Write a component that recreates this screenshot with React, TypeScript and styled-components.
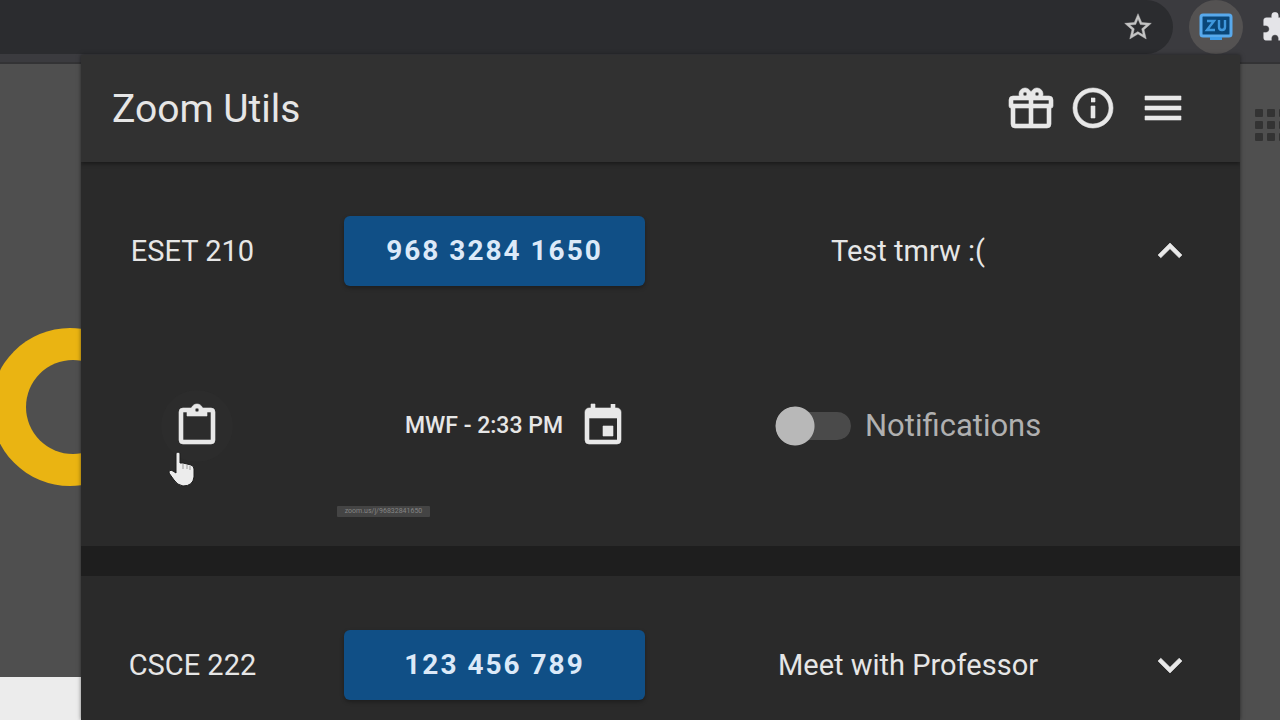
import React, { useState } from "react";
import styled, { createGlobalStyle } from "styled-components";

const GlobalStyle = createGlobalStyle`
  * { box-sizing: border-box; }
  html, body, #root { height: 100%; }
  body { margin: 0; background: #4f4f4f; color: #e6e6e6; font-family: Roboto, sans-serif; overflow: hidden; }
  button, input { font: inherit; }
`;

const Browser = styled.div`
  height: 100vh;
  display: flex;
  flex-direction: column;
`;

const Toolbar = styled.header`
  height: 64px;
  flex: none;
  display: flex;
  align-items: flex-start;
  background: #3b3b3f;
  border-bottom: 2px solid #333335;
`;

const AddressBar = styled.div`
  flex: 1;
  height: 54px;
  display: flex;
  align-items: center;
  justify-content: flex-end;
  padding-right: 19px;
  border-radius: 0 27px 27px 0;
  background: #2b2c2f;
`;

const PlainButton = styled.button`
  display: flex;
  align-items: center;
  justify-content: center;
  padding: 0;
  border: 0;
  background: none;
  color: inherit;
  cursor: pointer;
`;

const Extensions = styled.div`
  width: 107px;
  height: 54px;
  display: flex;
  align-items: center;
  gap: 18px;
  padding-left: 16px;
  overflow: hidden;
`;

const ExtensionButton = styled(PlainButton)`
  flex: none;
  width: 54px;
  height: 54px;
  border-radius: 50%;
  background: #545252;
`;

const PuzzleButton = styled(PlainButton)`
  flex: none;
`;

const Page = styled.main`
  flex: 1;
  min-height: 0;
  display: grid;
  grid-template-columns: 81px 1fr 40px;
  grid-template-rows: minmax(0, 1fr);
`;

const Backdrop = styled.div`
  display: flex;
  flex-direction: column;
  justify-content: space-between;
  overflow: hidden;
`;

const Logo = styled.svg`
  display: block;
  flex: none;
  margin-top: 263px;
`;

const Footer = styled.div`
  height: 43px;
  background: #ececec;
`;

const AppsButton = styled(PlainButton)`
  width: 40px;
  margin-top: 44px;
  justify-content: flex-start;
  padding-left: 15px;

  svg { flex: none; }
`;

const Popup = styled.section`
  position: relative;
  display: flex;
  flex-direction: column;
  margin-top: -9px;
  overflow-y: auto;
  scrollbar-width: none;
  background: #1e1e1e;
  box-shadow: 0 0 4px rgba(0, 0, 0, 0.5);
`;

const AppBar = styled.div`
  height: 107px;
  flex: none;
  display: flex;
  align-items: center;
  padding: 0 53px 0 31px;
  background: #313131;
  box-shadow: 0 2px 4px rgba(0, 0, 0, 0.4);
  z-index: 1;
`;

const Title = styled.h1`
  flex: 1;
  margin: 0;
  font-size: 39px;
  line-height: 48px;
  font-weight: 400;
`;

const BarActions = styled.nav`
  display: flex;
  gap: 14px;
  padding-bottom: 2px;

  button:last-child { margin-left: 8px; }
`;

const Meetings = styled.div`
  display: flex;
  flex-direction: column;
  gap: 30px;
`;

const Meeting = styled.article`
  background: #2a2a2a;
`;

const Row = styled.div<{ $detail?: boolean }>`
  height: ${(p) => (p.$detail ? "208px" : "176px")};
  display: grid;
  grid-template-columns: 223px 381px 1fr 94px;
  align-items: center;
  padding: ${(p) => (p.$detail ? "0 0 32px" : "2px 0 0")};
`;

const Name = styled.h2`
  margin: 0;
  text-align: center;
  font-size: 29px;
  line-height: 36px;
  font-weight: 400;
`;

const Note = styled.p`
  margin: 0;
  padding-right: 15px;
  text-align: center;
  font-size: 29px;
  line-height: 36px;
`;

const JoinButton = styled.button`
  justify-self: center;
  width: 301px;
  height: 70px;
  border: 0;
  border-radius: 6px;
  background: #104f86;
  color: #dce9f8;
  font-size: 28px;
  line-height: 36px;
  font-weight: 700;
  letter-spacing: 2px;
  box-shadow: 0 2px 4px rgba(0, 0, 0, 0.3);
  cursor: pointer;
`;

const Toggle = styled(PlainButton)`
  width: 48px;
  height: 48px;
`;

const CopyButton = styled(PlainButton)`
  justify-self: center;
  width: 72px;
  height: 72px;
  margin-left: 8px;
  border-radius: 50%;
  background: #2c2c2c;
`;

const Schedule = styled.div`
  display: flex;
  align-items: center;
  justify-content: flex-end;
  gap: 16px;
  padding-right: 58px;
  font-size: 23px;
  font-weight: 500;
  line-height: 32px;
`;

const SwitchLabel = styled.label`
  display: flex;
  align-items: center;
  gap: 14px;
  padding-left: 90px;
  color: #b0b0b0;
  font-size: 31px;
  line-height: 36px;
`;

const Switch = styled.input`
  appearance: none;
  flex: none;
  width: 76px;
  height: 40px;
  margin: 0;
  border-radius: 20px;
  background:
    radial-gradient(circle at ${(p) => (p.checked ? "56px" : "20px")} 20px, #b8b8b8 19px, transparent 20px),
    linear-gradient(#4a4a4a, #4a4a4a) right center / 62px 28px no-repeat;
  clip-path: path("M20 0 A20 20 0 0 0 20 40 Q32 40 37 34 H62 A14 14 0 0 0 62 6 H37 Q32 0 20 0 Z");
`;

const Tooltip = styled.span`
  position: absolute;
  left: 256px;
  top: 451px;
  width: 93px;
  height: 11px;
  border-radius: 1px;
  background: #444;
  color: #858585;
  font-size: 7px;
  line-height: 11px;
  text-align: center;
  white-space: nowrap;
`;

const Pointer = styled.svg`
  position: absolute;
  left: 87px;
  top: 395px;
  pointer-events: none;
`;

const paths = {
  gift: "M22,12V20A2,2 0 0,1 20,22H4A2,2 0 0,1 2,20V12A1,1 0 0,1 1,11V8A2,2 0 0,1 3,6H6.17C6.06,5.69 6,5.35 6,5A3,3 0 0,1 9,2C10,2 10.88,2.5 11.43,3.24V3.23L12,4L12.57,3.23V3.24C13.12,2.5 14,2 15,2A3,3 0 0,1 18,5C18,5.35 17.94,5.69 17.83,6H21A2,2 0 0,1 23,8V11A1,1 0 0,1 22,12M4,20H11V12H4V20M20,20V12H13V20H20M9,4A1,1 0 0,0 8,5A1,1 0 0,0 9,6A1,1 0 0,0 10,5A1,1 0 0,0 9,4M15,4A1,1 0 0,0 14,5A1,1 0 0,0 15,6A1,1 0 0,0 16,5A1,1 0 0,0 15,4M3,8V10H11V8H3M13,8V10H21V8H13Z",
  info: "M11,9H13V7H11M12,20C7.59,20 4,16.41 4,12C4,7.59 7.59,4 12,4C16.41,4 20,7.59 20,12C20,16.41 16.41,20 12,20M12,2A10,10 0 0,0 2,12A10,10 0 0,0 12,22A10,10 0 0,0 22,12A10,10 0 0,0 12,2M11,17H13V11H11V17Z",
  menu: "M3,6H21V8H3V6M3,11H21V13H3V11M3,16H21V18H3V16Z",
  clipboard: "M19,3H14.82C14.4,1.84 13.3,1 12,1C10.7,1 9.6,1.84 9.18,3H5A2,2 0 0,0 3,5V19A2,2 0 0,0 5,21H19A2,2 0 0,0 21,19V5A2,2 0 0,0 19,3M12,3A1,1 0 0,1 13,4A1,1 0 0,1 12,5A1,1 0 0,1 11,4A1,1 0 0,1 12,3M7,7H17V5H19V19H5V5H7V7Z",
  calendar: "M19,19H5V8H19M16,1V3H8V1H6V3H5C3.89,3 3,3.89 3,5V19A2,2 0 0,0 5,21H19A2,2 0 0,0 21,19V5C21,3.89 20.1,3 19,3H18V1M17,12H12V17H17V12Z",
  up: "M7.41,15.41L12,10.83L16.59,15.41L18,14L12,8L6,14L7.41,15.41Z",
  down: "M7.41,8.58L12,13.17L16.59,8.58L18,10L12,16L6,10L7.41,8.58Z",
  star: "M12,15.39L8.24,17.66L9.23,13.38L5.91,10.5L10.29,10.13L12,6.09L13.71,10.13L18.09,10.5L14.77,13.38L15.76,17.66M22,9.24L14.81,8.63L12,2L9.19,8.63L2,9.24L7.45,13.97L5.82,21L12,17.27L18.18,21L16.54,13.97L22,9.24Z",
  puzzle: "M20.5,11H19V7C19,5.89 18.1,5 17,5H13V3.5A2.5,2.5 0 0,0 10.5,1A2.5,2.5 0 0,0 8,3.5V5H4A2,2 0 0,0 2,7V10.8H3.5C5,10.8 6.2,12 6.2,13.5C6.2,15 5,16.2 3.5,16.2H2V20A2,2 0 0,0 4,22H7.8V20.5C7.8,19 9,17.8 10.5,17.8C12,17.8 13.2,19 13.2,20.5V22H17A2,2 0 0,0 19,20V16H20.5A2.5,2.5 0 0,0 23,13.5A2.5,2.5 0 0,0 20.5,11Z",
};

interface IconProps {
  name: keyof typeof paths;
  size?: number;
  color?: string;
}

function Icon({ name, size = 48, color = "#e8e8e8" }: IconProps) {
  return (
    <svg width={size} height={size} viewBox="0 0 24 24" fill={color} stroke={color} strokeWidth="0.3" aria-hidden="true">
      <path d={paths[name]} />
    </svg>
  );
}

function MonitorLogo() {
  return (
    <svg width="34" height="30" viewBox="0 0 34 30" aria-hidden="true">
      <rect x="2" y="3" width="30" height="21" rx="2" fill="#0a4678" stroke="#58a9ec" strokeWidth="3" />
      <path d="M11 25h12v3H11z" fill="#3d9be8" />
      <path d="M8 9h7l-7 9h8M20 8v7q0 3 3 3h0q3 0 3-3V8" fill="none" stroke="#3f97dc" strokeWidth="2.4" />
    </svg>
  );
}

export default function App() {
  const [open, setOpen] = useState(true);
  const [notify, setNotify] = useState(false);

  return (
    <>
      <GlobalStyle />
      <Browser>
        <Toolbar>
          <AddressBar>
            <PlainButton aria-label="Bookmark">
              <Icon name="star" size={32} color="#c4c4c4" />
            </PlainButton>
          </AddressBar>
          <Extensions>
            <ExtensionButton aria-label="Zoom Utils extension">
              <MonitorLogo />
            </ExtensionButton>
            <PuzzleButton aria-label="Extensions">
              <Icon name="puzzle" size={32} color="#e4e4e8" />
            </PuzzleButton>
          </Extensions>
        </Toolbar>
        <Page>
          <Backdrop>
            <Logo width="81" height="160" viewBox="0 0 81 160" aria-hidden="true">
              <circle cx="70" cy="80" r="79" fill="#eab412" />
              <circle cx="73" cy="80" r="47" fill="#4f4f4f" />
            </Logo>
            <Footer />
          </Backdrop>
          <Popup>
            <AppBar>
              <Title>Zoom Utils</Title>
              <BarActions>
                <PlainButton aria-label="Gift"><Icon name="gift" /></PlainButton>
                <PlainButton aria-label="Information"><Icon name="info" /></PlainButton>
                <PlainButton aria-label="Menu"><Icon name="menu" /></PlainButton>
              </BarActions>
            </AppBar>
            <Meetings>
              <Meeting>
                <Row>
                  <Name>ESET 210</Name>
                  <JoinButton>968 3284 1650</JoinButton>
                  <Note>Test tmrw :(</Note>
                  <Toggle aria-label="Toggle details" aria-expanded={open} onClick={() => setOpen(!open)}>
                    <Icon name={open ? "up" : "down"} />
                  </Toggle>
                </Row>
                {open && (
                  <Row $detail>
                    <CopyButton aria-label="Copy link"><Icon name="clipboard" /></CopyButton>
                    <Schedule>
                      <span>MWF - 2:33 PM</span>
                      <PlainButton aria-label="Edit schedule"><Icon name="calendar" /></PlainButton>
                    </Schedule>
                    <SwitchLabel>
                      <Switch type="checkbox" role="switch" checked={notify} onChange={() => setNotify(!notify)} />
                      Notifications
                    </SwitchLabel>
                  </Row>
                )}
              </Meeting>
              <Meeting>
                <Row>
                  <Name>CSCE 222</Name>
                  <JoinButton>123 456 789</JoinButton>
                  <Note>Meet with Professor</Note>
                  <Toggle aria-label="Toggle details" aria-expanded={false}>
                    <Icon name="down" />
                  </Toggle>
                </Row>
              </Meeting>
            </Meetings>
            <Pointer width="28" height="38" viewBox="0 0 28 38" aria-hidden="true">
              <path d="M8 3Q10 1 12 3V13L15 13L19 14L23 15Q26 16 26 19V27Q25 36 15 36Q9 35 6 30L1 23Q1 19 5 21L8 23Z" fill="#ececec" stroke="#1c1c1c" />
              <path d="M15 14v5M19 15v4M22 16v4" stroke="#999" />
            </Pointer>
            <Tooltip>zoom.us/j/96832841650</Tooltip>
          </Popup>
          <Backdrop>
            <AppsButton aria-label="Apps">
              <svg width="36" height="34" viewBox="0 0 36 34" fill="#333" aria-hidden="true">
                {[0, 12, 24].map((y) => [0, 12, 24].map((x) => <rect key={`${x}-${y}`} x={x} y={y + 1} width="8" height="8" rx="1" />))}
              </svg>
            </AppsButton>
          </Backdrop>
        </Page>
      </Browser>
    </>
  );
}
